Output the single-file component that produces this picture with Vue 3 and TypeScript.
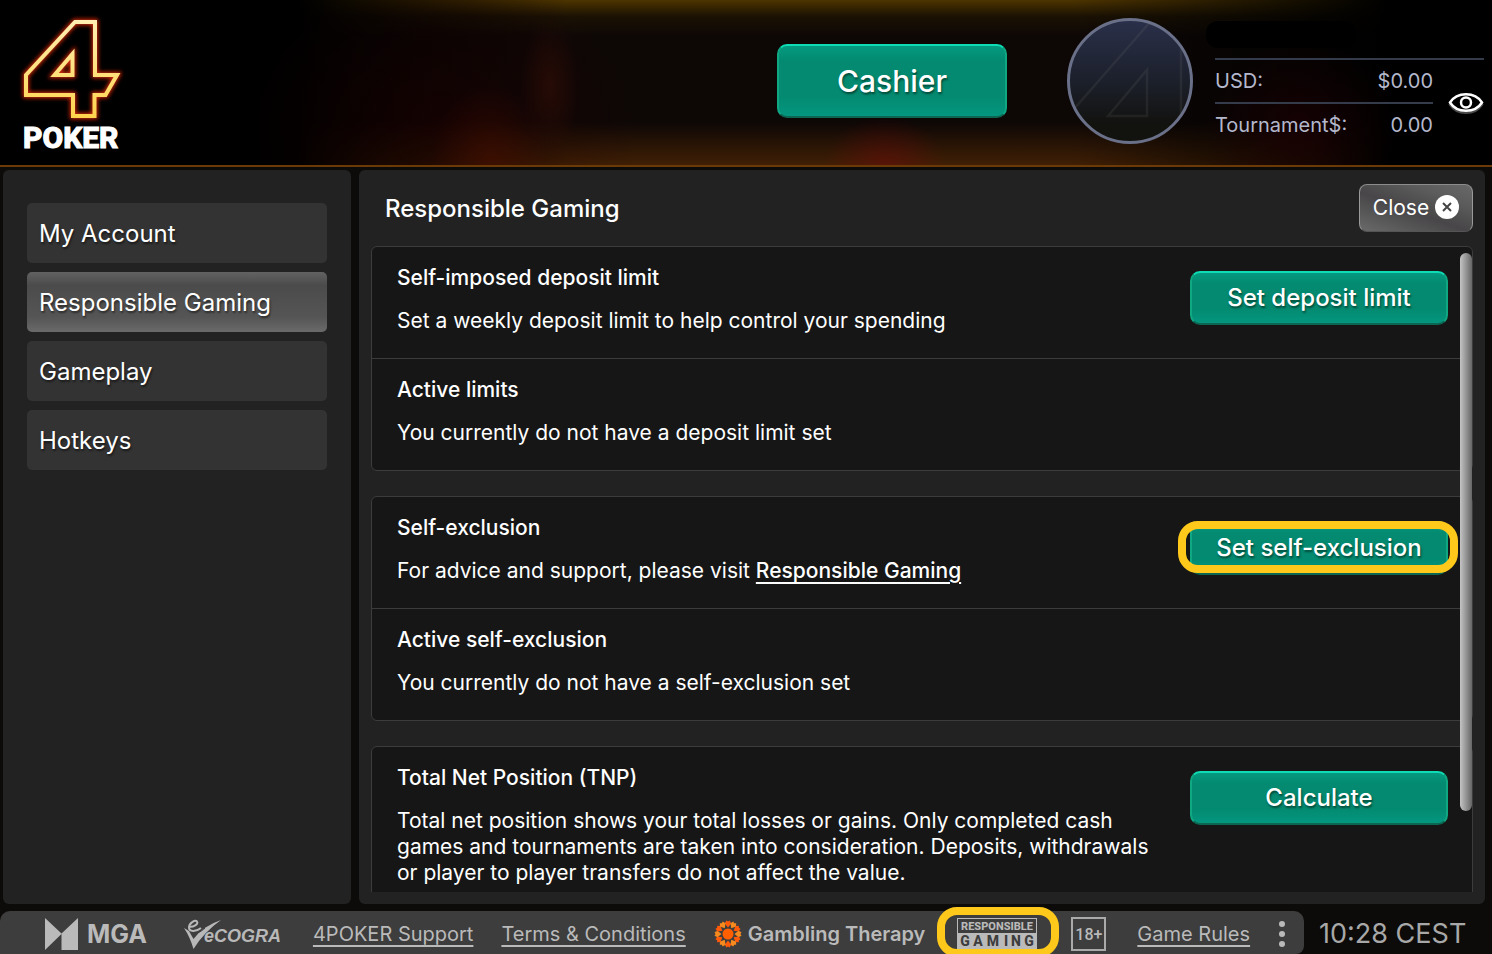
<script setup lang="ts">
import { ref } from 'vue'

const menu: string[] = ['My Account', 'Responsible Gaming', 'Gameplay', 'Hotkeys']
const current = ref<string>('Responsible Gaming')

const petals: number[] = Array.from({ length: 12 }, (_, i) => i * 30)
</script>

<template>
  <div class="app">
    <header class="top">
      <svg class="logo" viewBox="0 0 114 146" role="img" aria-label="4 Poker">
        <defs>
          <linearGradient id="gold" gradientUnits="userSpaceOnUse" x1="0" y1="10" x2="0" y2="110">
            <stop offset="0" stop-color="#ffefb4" />
            <stop offset="1" stop-color="#ffd44c" />
          </linearGradient>
          <filter id="glow" x="-20%" y="-20%" width="140%" height="140%">
            <feGaussianBlur stdDeviation="2" />
          </filter>
        </defs>
        <g fill="none" stroke="#d92a08" stroke-width="6" filter="url(#glow)">
          <path d="M65 14H85V67H107L95.500 87H84.500V108H63V87H16V67Z" />
          <path d="M44.500 67L62.500 46V67Z" />
        </g>
        <g fill="none" stroke="url(#gold)" stroke-width="4">
          <path d="M65 14H85V67H107L95.500 87H84.500V108H63V87H16V67Z" />
          <path d="M44.500 67L62.500 46V67Z" />
        </g>
        <text class="logo-word" x="13" y="140">POKER</text>
      </svg>

      <button type="button" class="btn cashier">Cashier</button>

      <svg class="avatar" viewBox="0 0 126 126" role="img" aria-label="Avatar">
        <defs>
          <linearGradient id="disc" x1="0" y1="0" x2="0" y2="1">
            <stop offset="0" stop-color="#2a304a" />
            <stop offset="0.500" stop-color="#1c202b" />
            <stop offset="0.850" stop-color="#12120f" />
          </linearGradient>
          <clipPath id="round"><circle cx="63" cy="63" r="60" /></clipPath>
        </defs>
        <circle cx="63" cy="63" r="61.500" fill="url(#disc)" stroke="#6a7088" stroke-width="3" />
        <g clip-path="url(#round)" fill="none" stroke="#8a8a80" stroke-opacity="0.120" stroke-width="2.500">
          <path d="M0 99L84 3" />
          <path d="M114 26V100" />
          <path d="M41 98L80 52V98Z" />
        </g>
      </svg>

      <div class="info">
        <div class="player"><span class="mask"></span></div>
        <div class="funds">
          <dl class="balances">
            <div class="balance"><dt>USD:</dt><dd>$0.00</dd></div>
            <div class="balance"><dt>Tournament$:</dt><dd>0.00</dd></div>
          </dl>
          <button type="button" class="eye" aria-label="Show balances">
            <svg viewBox="0 0 36 24">
              <path d="M2 13.500C9 2.500 27 2.500 34 13.500C27 24.500 9 24.500 2 13.500Z" fill="none" stroke="#4b4b4b" stroke-width="2.500" />
              <path d="M2 11.500C9 0.500 27 0.500 34 11.500C27 22.500 9 22.500 2 11.500Z" fill="#000" stroke="#fff" stroke-width="2.500" />
              <circle cx="18" cy="11.500" r="5" fill="none" stroke="#fff" stroke-width="2.500" />
            </svg>
          </button>
        </div>
      </div>
    </header>

    <div class="middle">
      <nav class="side" aria-label="Settings">
        <button
          v-for="item in menu"
          :key="item"
          type="button"
          class="item"
          :class="{ active: item === current }"
          @click="current = item"
        >{{ item }}</button>
      </nav>

      <main class="panel">
        <div class="panel-head">
          <h1>Responsible Gaming</h1>
          <button type="button" class="close">
            Close
            <svg viewBox="0 0 24 24">
              <circle cx="12" cy="12" r="12" fill="#fff" />
              <path d="M8 8L16 16M16 8L8 16" stroke="#444" stroke-width="2" />
            </svg>
          </button>
        </div>

        <div class="viewport">
          <div class="scroll">
            <section class="card">
              <div class="row">
                <div class="copy">
                  <h2>Self-imposed deposit limit</h2>
                  <p>Set a weekly deposit limit to help control your spending</p>
                </div>
                <div class="control">
                  <button type="button" class="btn action">Set deposit limit</button>
                </div>
              </div>
              <div class="row">
                <div class="copy">
                  <h2>Active limits</h2>
                  <p>You currently do not have a deposit limit set</p>
                </div>
              </div>
            </section>

            <section class="card">
              <div class="row">
                <div class="copy">
                  <h2>Self-exclusion</h2>
                  <p>For advice and support, please visit <a href="#">Responsible Gaming</a></p>
                </div>
                <div class="control marked">
                  <button type="button" class="btn action">Set self-exclusion</button>
                </div>
              </div>
              <div class="row">
                <div class="copy">
                  <h2>Active self-exclusion</h2>
                  <p>You currently do not have a self-exclusion set</p>
                </div>
              </div>
            </section>

            <section class="card">
              <div class="row">
                <div class="copy">
                  <h2>Total Net Position (TNP)</h2>
                  <p>
                    Total net position shows your total losses or gains. Only completed cash games and
                    tournaments are taken into consideration. Deposits, withdrawals or player to player
                    transfers do not affect the value.
                  </p>
                </div>
                <div class="control">
                  <button type="button" class="btn action">Calculate</button>
                </div>
              </div>
            </section>
          </div>
          <span class="thumb"></span>
        </div>
      </main>
    </div>

    <footer class="foot">
      <div class="bar">
        <a href="#" class="mga">
          <svg viewBox="0 0 33 32"><path d="M0 0L16.500 15.500L33 0V32H16.500V16L0 32Z" fill="#bababa" /></svg>
          MGA
        </a>
        <a href="#" class="ecogra" aria-label="eCOGRA">
          <svg viewBox="0 0 102 32">
            <path d="M1 10L6 13L10.500 21Q20 8 38 2Q21 14 10.500 31Q7 19 1 10Z" fill="#b8b8b8" />
            <path d="M6 8.500C10 9.500 16 6 14 3.500C12 1.500 6 5 6 9.500C6 14 13 14 18 10" fill="none" stroke="#b8b8b8" stroke-width="2" />
            <path d="M8 16Q15 16.500 22 10" fill="none" stroke="#3d3d3d" stroke-width="1" />
            <text class="ecogra-word" x="21" y="24">eCOGRA</text>
          </svg>
        </a>
        <a href="#" class="link">4POKER Support</a>
        <a href="#" class="link">Terms &amp; Conditions</a>
        <a href="#" class="therapy">
          <svg viewBox="0 0 28 28">
            <g v-for="angle in petals" :key="angle" :transform="`rotate(${angle} 14 14)`">
              <path d="M14 7.500L10.800 3.500L12.300 0.500L14 1.500L15.700 0.500L17.200 3.500Z" :fill="angle % 60 ? '#f58a1f' : '#ff5a0a'" />
            </g>
            <circle cx="14" cy="14" r="5.500" fill="#ff5f00" />
          </svg>
          Gambling Therapy
        </a>
        <a href="#" class="badge">
          <svg viewBox="0 0 80 32" role="img" aria-label="Responsible Gaming">
            <rect x="0.500" y="0.500" width="79" height="31" fill="#3d3d3d" stroke="#bababa" />
            <rect x="1" y="15" width="78" height="16" fill="#bababa" />
            <text class="badge-top" x="40" y="12">RESPONSIBLE</text>
            <g class="badge-low">
              <text x="8" y="28">G</text><text x="21" y="28">A</text><text x="36" y="28">M</text>
              <text x="49" y="28">I</text><text x="59" y="28">N</text><text x="72" y="28">G</text>
            </g>
          </svg>
        </a>
        <a href="#" class="age">18+</a>
        <a href="#" class="link">Game Rules</a>
        <button type="button" class="more" aria-label="More">
          <svg viewBox="0 0 8 28">
            <circle cx="4" cy="4" r="3" /><circle cx="4" cy="14" r="3" /><circle cx="4" cy="24" r="3" />
          </svg>
        </button>
      </div>
      <time class="clock">10:28 CEST</time>
    </footer>
  </div>
</template>

<style>
body {
  background: #0c0b09;
}
</style>

<style scoped>
* {
  box-sizing: border-box;
}
.app {
  display: flex;
  flex-direction: column;
  height: 100vh;
  overflow: hidden;
  background: #0c0b09;
  color: #fff;
  font-family: Inter, "Liberation Sans", sans-serif;
  font-size: 21px;
}
button {
  font: inherit;
  color: inherit;
  margin: 0;
  padding: 0;
  border: 0;
  background: none;
  cursor: pointer;
}
h1, h2, p, dl, dd {
  margin: 0;
}
svg {
  display: block;
}

.top {
  flex: none;
  display: flex;
  align-items: center;
  height: 167px;
  padding: 0 8px 3px 10px;
  border-bottom: 2px solid #6b3a06;
  background:
    radial-gradient(ellipse 30px 70px at 550px 85px, rgba(60, 16, 6, 0.5), transparent),
    radial-gradient(ellipse 60px 80px at 490px 165px, rgba(80, 16, 0, 0.5), transparent),
    radial-gradient(ellipse 60px 48px at 885px 165px, rgba(110, 10, 10, 0.5), transparent),
    radial-gradient(ellipse 100px 90px at 1300px 130px, rgba(40, 0, 4, 0.5), transparent),
    radial-gradient(ellipse 200px 160px at 440px 130px, rgba(34, 0, 0, 0.5), transparent),
    linear-gradient(90deg, #000 20%, rgba(0, 0, 0, 0) 38%, rgba(0, 0, 0, 0) 72%, #000 93%),
    linear-gradient(#4d3400, rgba(40, 28, 0, 0.5) 10%, rgba(0, 0, 0, 0) 22%, rgba(0, 0, 0, 0) 74%, rgba(70, 34, 4, 0.9)),
    #0d0706;
}
.logo {
  width: 114px;
  height: 146px;
}
.logo-word {
  font: 800 30px Roboto, sans-serif;
  fill: #fff;
  stroke: #fff;
  stroke-width: 1;
}
.btn {
  border: 2px solid;
  border-color: #0ddcb4 #10a883 #0b6752;
  border-radius: 10px;
  background: linear-gradient(#049a80, #038a70 22%, #038a70 70%, #04967f);
  font-weight: 500;
  text-shadow: 1px 2px 2px rgba(0, 60, 45, 0.8);
}
.cashier {
  width: 230px;
  height: 74px;
  margin-left: auto;
  font-size: 30px;
}
.avatar {
  width: 126px;
  height: 126px;
  margin: 0 22px 0 60px;
}
.info {
  width: 269px;
  padding-bottom: 16px;
  color: #b4b8cc;
}
.player {
  height: 60px;
  padding-top: 21px;
  border-bottom: 2px solid #343c4c;
}
.mask {
  display: block;
  width: 150px;
  height: 27px;
  margin-left: -9px;
  border-radius: 12px;
  background: #000;
}
.funds {
  display: flex;
  align-items: center;
  justify-content: space-between;
}
.balances {
  width: 218px;
  font-size: 20px;
}
.balance {
  display: flex;
  justify-content: space-between;
  align-items: center;
  height: 42px;
}
.balance + .balance {
  height: 44px;
  border-top: 2px solid #343c4c;
}
.eye,
.eye svg {
  width: 36px;
  height: 24px;
}

.middle {
  flex: 1;
  min-height: 0;
  display: flex;
  gap: 8px;
  padding: 3px 7px 7px 3px;
}
.side,
.panel {
  border-radius: 6px;
  background: #222;
}
.side {
  flex: none;
  width: 348px;
  padding: 33px 24px;
  display: flex;
  flex-direction: column;
  gap: 9px;
}
.item {
  height: 60px;
  padding: 0 12px;
  border-radius: 5px;
  background: #333;
  font-size: 24px;
  text-align: left;
  text-shadow: 1px 2px 2px rgba(0, 0, 0, 0.5);
}
.item.active {
  background: linear-gradient(#626262, #4b4b4b 22%, #555 75%, #6a6a6a);
}
.panel {
  flex: 1;
  min-width: 0;
  display: flex;
  flex-direction: column;
  padding: 14px 12px 12px;
}
.panel-head {
  display: flex;
  align-items: center;
  justify-content: space-between;
  padding-left: 14px;
  margin-bottom: 14px;
}
h1 {
  font-size: 24px;
  font-weight: 500;
}
.close {
  display: flex;
  align-items: center;
  justify-content: center;
  gap: 6px;
  width: 114px;
  height: 48px;
  padding-bottom: 2px;
  border: 1px solid;
  border-color: #8c8c8c #999 #555;
  border-radius: 8px;
  background: linear-gradient(20deg, #6a6a6a, #484648 45%, #5c5c5c 75%, #686868);
}
.close svg {
  width: 24px;
  height: 24px;
}
.viewport {
  position: relative;
  flex: 1;
  min-height: 0;
}
.scroll {
  height: 100%;
  overflow: hidden;
  display: flex;
  flex-direction: column;
  gap: 25px;
}
.card {
  flex: none;
  border: 1px solid #3c3c3c;
  border-radius: 6px;
  background: #161616;
}
.row {
  display: flex;
  justify-content: space-between;
  align-items: flex-start;
  padding: 18px 24px 24px 25px;
}
.row + .row {
  border-top: 1px solid #3c3c3c;
}
.copy {
  max-width: 770px;
  line-height: 26px;
}
h2 {
  margin-bottom: 17px;
  font-size: 21px;
  font-weight: 500;
}
p a {
  color: inherit;
  font-weight: 500;
  text-underline-offset: 4px;
}
.control {
  position: relative;
  flex: none;
  margin-top: 6px;
}
.action {
  display: block;
  width: 258px;
  height: 54px;
  padding-bottom: 2px;
  font-size: 24px;
}
.marked::after {
  content: "";
  position: absolute;
  inset: 0 -10px 2px -12px;
  border: 8px solid #ffc91c;
  border-radius: 20px;
  pointer-events: none;
}
.thumb {
  position: absolute;
  top: 7px;
  right: 1px;
  width: 12px;
  height: 558px;
  border-radius: 6px;
  background: linear-gradient(90deg, #c4c4c4, #666);
}

.foot {
  flex: none;
  display: flex;
  align-items: center;
  height: 43px;
  color: #bababa;
}
.bar {
  flex: 1;
  display: flex;
  align-items: center;
  gap: 28px;
  height: 100%;
  padding: 3px 18px 0 45px;
  border-radius: 10px 10px 8px 0;
  background: #3d3d3d;
  white-space: nowrap;
}
.bar a {
  color: inherit;
}
.link {
  font-size: 20px;
  text-underline-offset: 4px;
}
.mga,
.therapy {
  display: flex;
  align-items: center;
  text-decoration: none;
}
.mga {
  gap: 9px;
  margin-right: 8px;
  font-size: 25px;
  font-weight: 700;
}
.mga svg {
  width: 33px;
  height: 32px;
}
.ecogra svg {
  width: 102px;
  height: 32px;
}
.ecogra-word {
  font: italic 700 18px "Liberation Sans", sans-serif;
  fill: #b8b8b8;
}
.therapy {
  gap: 6px;
  font-size: 20px;
  font-weight: 600;
}
.therapy svg {
  width: 28px;
  height: 28px;
}
.badge {
  position: relative;
  margin: 0 6px 0 4px;
}
.badge::after {
  content: "";
  position: absolute;
  inset: -11px -22px -7px -20px;
  border: 8px solid #ffc91c;
  border-radius: 20px;
}
.badge svg {
  width: 80px;
  height: 32px;
}
.badge-top,
.badge-low text {
  text-anchor: middle;
  fill: #bababa;
  font-family: Roboto, sans-serif;
  font-size: 11px;
  font-weight: 800;
}
.badge-low text {
  font-size: 14px;
  fill: #3d3d3d;
}
.age {
  display: flex;
  align-items: center;
  justify-content: center;
  width: 35px;
  height: 34px;
  margin-right: 3px;
  border: 2px solid #aaa;
  font: 500 16px Roboto, sans-serif;
  text-decoration: none;
}
.more {
  fill: #bababa;
}
.more svg {
  width: 8px;
  height: 28px;
}
.clock {
  flex: none;
  width: 188px;
  padding: 2px 0 0 15px;
  font-size: 27px;
  color: #a8a8a8;
}
</style>
